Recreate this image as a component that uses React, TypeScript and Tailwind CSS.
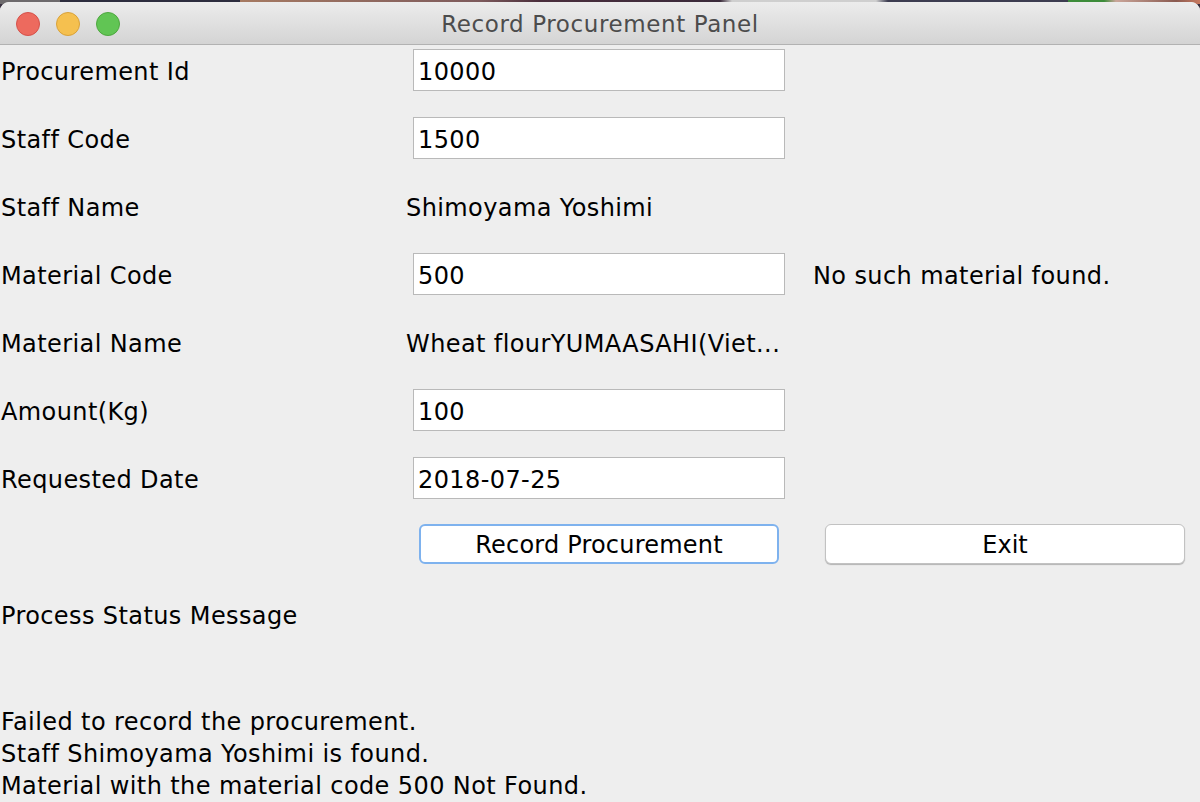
const font = { fontFamily: '"DejaVu Sans", "Liberation Sans", sans-serif' };

const txt = "text-[24px] tracking-[0.4px] text-black";

function Field({ value }: { value: string }) {
  return (
    <div className={`ml-[7px] w-[372px] h-[42px] bg-white border border-[#b9b9b9] flex items-center pl-[4px] pt-[3px] ${txt}`}>
      {value}
    </div>
  );
}

function Row({ label, children, note }: { label: string; children: React.ReactNode; note?: string }) {
  return (
    <div className="flex items-center h-[42px]">
      <div className={`w-[406px] pl-[1px] pt-[3px] ${txt}`}>{label}</div>
      {children}
      {note && <div className={`ml-[28px] pt-[3px] ${txt}`}>{note}</div>}
    </div>
  );
}

export default function App() {
  return (
    <div className="w-[1200px] h-[802px] overflow-hidden bg-[#3a3140]" style={font}>
      <div className="h-[4px] bg-[linear-gradient(90deg,#6d6a6c_0%,#6d6a6c_5%,#2c2c3e_5%,#2c2c3e_20%,#a67a62_20%,#7d5a5c_40%,#4a2e3c_45%,#3a2a3a_60%,#cfcfcf_61%,#cfcfcf_73%,#3c3c50_74%,#3c3c50_89%,#3d8c3a_89%,#3d8c3a_92%,#caa69a_93%,#8a5a50_98%,#c87a60_100%)]" />
      <div className="relative -mt-[2px] rounded-t-[9px] bg-[#eeeeee] h-[800px] overflow-hidden">
        <div className="relative h-[43px] bg-[linear-gradient(#ececec,#d4d4d4)] border-b border-[#b2b2b2] flex items-center justify-center">
          <div className="absolute left-[16px] top-[10px] flex gap-[16px]">
            <span className="w-[24px] h-[24px] rounded-full bg-[#ed6a5e] border border-[#d5514a]" />
            <span className="w-[24px] h-[24px] rounded-full bg-[#f5c04f] border border-[#d9a23a]" />
            <span className="w-[24px] h-[24px] rounded-full bg-[#61c554] border border-[#4ea73f]" />
          </div>
          <span className="pt-[3px] text-[23px] tracking-[0.6px] text-[#4c4c4c]">Record Procurement Panel</span>
        </div>

        <div className="flex flex-col gap-[26px] pt-[4px]">
          <Row label="Procurement Id"><Field value="10000" /></Row>
          <Row label="Staff Code"><Field value="1500" /></Row>
          <Row label="Staff Name"><span className={`pt-[3px] ${txt}`}>Shimoyama Yoshimi</span></Row>
          <Row label="Material Code" note="No such material found."><Field value="500" /></Row>
          <Row label="Material Name"><span className={`pt-[3px] ${txt}`}>Wheat flourYUMAASAHI(Viet...</span></Row>
          <Row label="Amount(Kg)"><Field value="100" /></Row>
          <Row label="Requested Date"><Field value="2018-07-25" /></Row>
        </div>

        <div className="flex mt-[25px] pl-[419px] gap-[46px]">
          <button className="w-[360px] h-[40px] rounded-[6px] bg-white border-2 border-[#7eb2ee] pt-[2px] text-[24px] tracking-[0.2px] text-black flex items-center justify-center">
            Record Procurement
          </button>
          <button className="w-[360px] h-[40px] rounded-[6px] bg-white border border-[#c2c2c2] shadow-[0_1px_1px_rgba(0,0,0,0.25)] pt-[2px] text-[24px] text-black flex items-center justify-center">
            Exit
          </button>
        </div>

        <div className={`mt-[34px] pl-[1px] ${txt}`}>Process Status Message</div>

        <div className={`mt-[72px] pl-[1px] ${txt} leading-[32px]`}>
          <div>Failed to record the procurement.</div>
          <div>Staff Shimoyama Yoshimi is found.</div>
          <div>Material with the material code 500 Not Found.</div>
        </div>
      </div>
    </div>
  );
}
